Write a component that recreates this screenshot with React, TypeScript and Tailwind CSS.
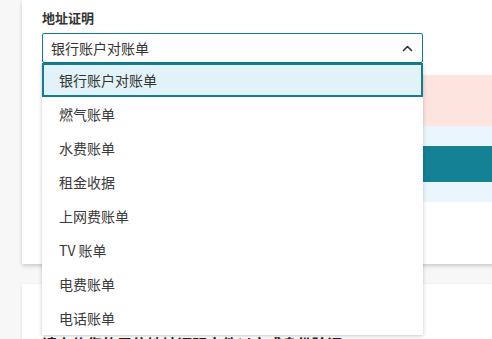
import React, { useState } from 'react';

const options = ['银行账户对账单', '燃气账单', '水费账单', '租金收据', '上网费账单', 'TV 账单', '电费账单', '电话账单'];

const font = { fontFamily: '"Noto Sans CJK SC", "Noto Sans", "Liberation Sans", sans-serif' };

const Chevron: React.FC = () => (
    <svg width="11" height="7" viewBox="0 0 11 7" fill="none">
        <path d="M1.5 5.5 L5.5 1.5 L9.5 5.5" stroke="#2b2f36" strokeWidth="1.6" strokeLinecap="round" strokeLinejoin="round" />
    </svg>
);

const App: React.FC = () => {
    const [value] = useState(options[0]);

    return (
        <div className="w-[492px] h-[339px] overflow-hidden bg-[#f7f7f7] pl-[22px]" style={font}>
            <div className="w-[560px] bg-white shadow-[0_2px_4px_rgba(0,0,0,0.18)] pt-[8px] pb-[62px] pl-[20px]">
                <div className="text-[13px] leading-[20px] font-bold text-[#333]">地址证明</div>
                <div className="relative mt-[5px] w-[381px]">
                    <div className="h-[30px] border border-[#0e7c8b] rounded-[2px] flex items-center justify-between pl-[8px] pr-[9px] bg-white">
                        <span className="text-[14px] text-[#333]">{value}</span>
                        <Chevron />
                    </div>
                    <ul className="absolute left-0 top-full w-[381px] bg-white shadow-[0_1px_4px_rgba(0,0,0,0.22)] z-10">
                        {options.map((o, i) => (
                            <li
                                key={o}
                                className={
                                    i === 0
                                        ? 'h-[34px] flex items-center pl-[15px] bg-[#e1f3f8] border-2 border-[#137c8d] text-[14px] text-[#333]'
                                        : 'h-[34px] flex items-center pl-[17px] text-[14px] text-[#3a3a3a]'
                                }
                            >
                                {o}
                            </li>
                        ))}
                    </ul>
                </div>
                <div className="mt-[12px] h-[51px] bg-[#fde4df]" />
                <div className="bg-[#eaf6fd] py-[20px]">
                    <div className="h-[36px] bg-[#158194]" />
                </div>
            </div>
            <div className="mt-[20px] w-[560px] h-[80px] bg-white shadow-[0_1px_3px_rgba(0,0,0,0.12)] pl-[20px] pt-[50px]">
                <div className="text-[15px] font-bold text-[#222] leading-[20px]">请上传您的居住地址证明文件以完成身份验证</div>
            </div>
        </div>
    );
};

export default App;
